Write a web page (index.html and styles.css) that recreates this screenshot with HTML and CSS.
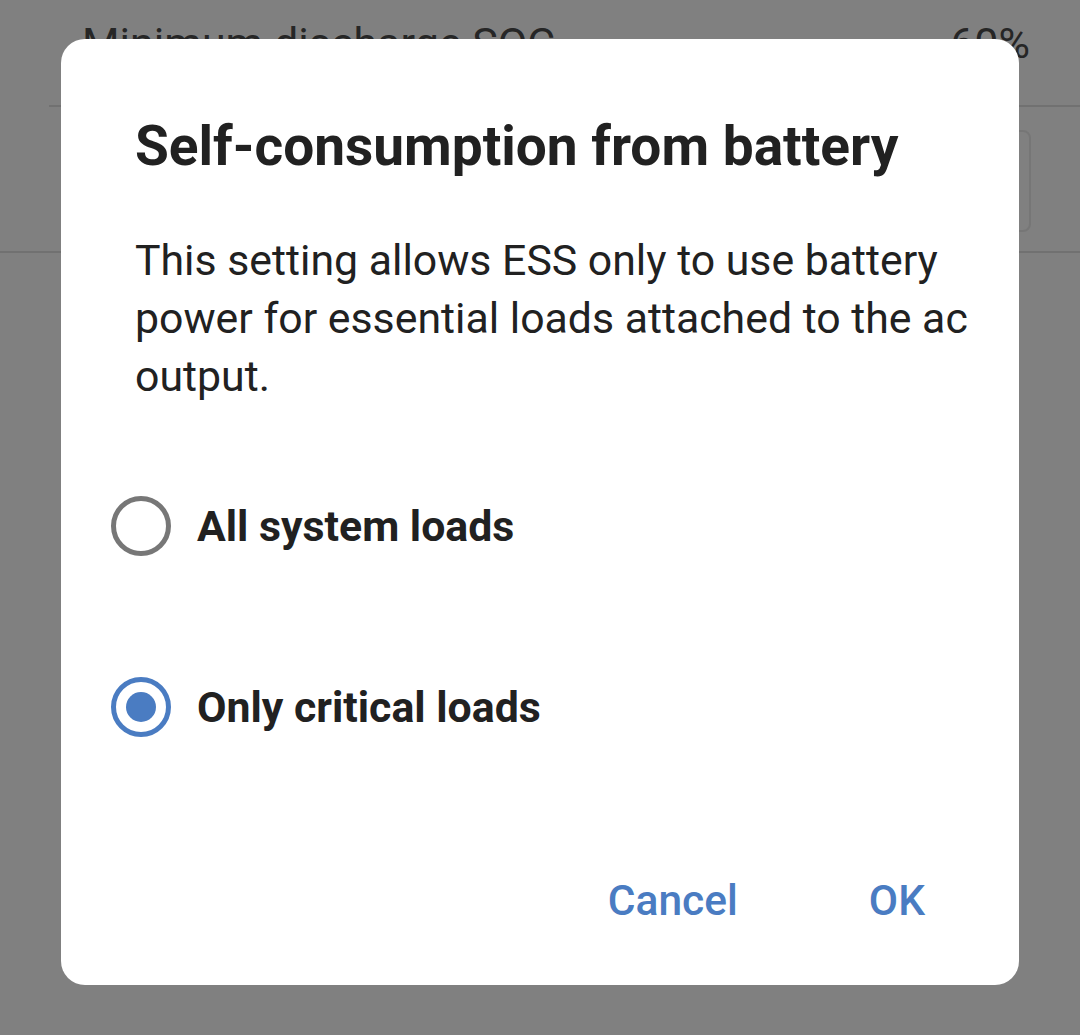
FILE: index.html
```html
<!DOCTYPE html>
<html lang="en">
<head>
    <meta charset="UTF-8">
    <meta name="viewport" content="width=device-width, initial-scale=1.0">
    <title>ESS Mode</title>
    <link rel="stylesheet" href="styles.css">
</head>
<body>

    <div class="page">
        <div class="setting-row">
            <span>Minimum discharge SOC</span>
            <span>60%</span>
        </div>
        <div class="field-row">
            <div class="field-box"></div>
        </div>
    </div>

    <div class="dialog">
        <h2 class="dialog-title">Self-consumption from battery</h2>
        <p class="dialog-text">This setting allows ESS only to use battery power for essential loads attached to the ac output.</p>

        <div class="options">
            <label class="option">
                <span class="radio"></span>
                <span>All system loads</span>
            </label>
            <label class="option">
                <span class="radio checked"></span>
                <span>Only critical loads</span>
            </label>
        </div>

        <div class="dialog-actions">
            <button class="text-btn">Cancel</button>
            <button class="text-btn">OK</button>
        </div>
    </div>

</body>
</html>
```

FILE: styles.css
```css
body {
    margin: 0;
    font-family: Roboto, "Noto Sans", sans-serif;
    background-color: #808080;
    height: 1035px;
    overflow: hidden;
}

.page {
    color: #262626;
}

.setting-row {
    display: flex;
    justify-content: space-between;
    height: 107px;
    box-sizing: border-box;
    margin-left: 49px;
    padding: 19px 50px 0 33px;
    border-bottom: 2px solid #717171;
    font-size: 43px;
    line-height: 48px;
}

.field-row {
    display: flex;
    justify-content: flex-end;
    height: 146px;
    box-sizing: border-box;
    padding: 23px 49px 0 0;
    border-bottom: 2px solid #717171;
}

.field-box {
    width: 200px;
    height: 102px;
    box-sizing: border-box;
    border: 2px solid #767676;
    border-radius: 8px;
}

.dialog {
    position: fixed;
    left: 61px;
    top: 39px;
    width: 958px;
    height: 946px;
    box-sizing: border-box;
    padding: 75px 36px 52px 50px;
    background: white;
    border-radius: 24px;
    display: flex;
    flex-direction: column;
    color: #212121;
}

.dialog-title {
    margin: 0 0 0 24px;
    font-size: 55px;
    line-height: 64px;
    font-weight: 700;
}

.dialog-text {
    margin: 53px 0 0 24px;
    font-size: 42.8px;
    line-height: 58px;
}

.options {
    display: flex;
    flex-direction: column;
    gap: 61px;
    margin-top: 61px;
}

.option {
    display: flex;
    align-items: center;
    gap: 26px;
    height: 120px;
    font-size: 42.8px;
    line-height: 58px;
    font-weight: 700;
}

.radio {
    width: 60px;
    height: 60px;
    box-sizing: border-box;
    border: 5px solid #777777;
    border-radius: 50%;
    display: flex;
    align-items: center;
    justify-content: center;
}

.radio.checked {
    border-color: #4a7cc2;
}

.radio.checked::after {
    content: "";
    width: 30px;
    height: 30px;
    border-radius: 50%;
    background: #4a7cc2;
}

.dialog-actions {
    margin-top: auto;
    margin-right: 58px;
    display: flex;
    justify-content: flex-end;
    gap: 131px;
}

.text-btn {
    background: none;
    border: none;
    padding: 0;
    font-family: Roboto, "Noto Sans", sans-serif;
    font-size: 42.5px;
    line-height: 64px;
    font-weight: 500;
    color: #4a7cc2;
    cursor: pointer;
}
```
